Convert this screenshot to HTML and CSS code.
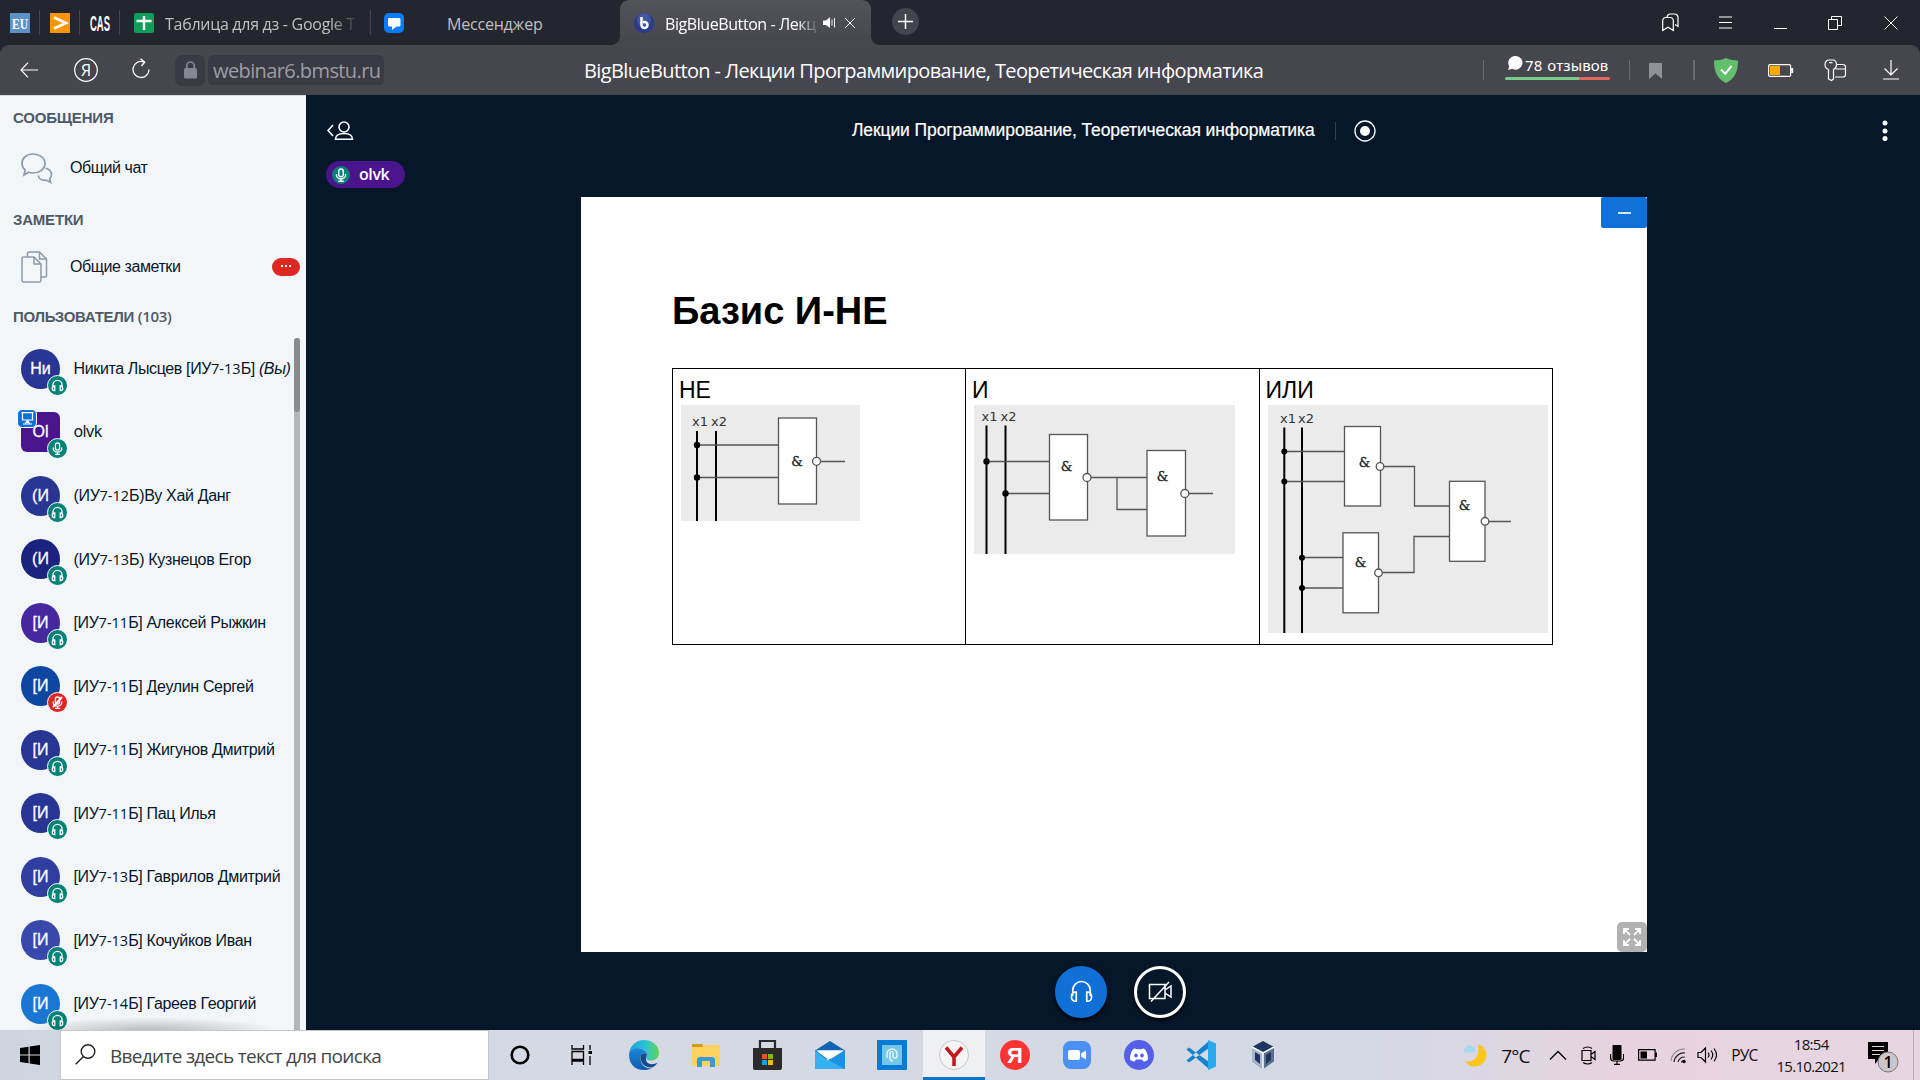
FILE: index.html
```html
<!DOCTYPE html>
<html lang="ru">
<head>
<meta charset="utf-8">
<title>BigBlueButton - Лекции Программирование, Теоретическая информатика</title>
<link rel="stylesheet" href="styles.css">
</head>
<body>
<svg class="defs" width="0" height="0">
  <symbol id="phones" viewBox="0 0 20 20"><path d="M3 13.500V9a7 7 0 0 1 14 0v4.500M5.800 10.500v7.300H5A3 3 0 0 1 2 14.800v-1.300a3 3 0 0 1 3-3zM14.200 10.500v7.300h.8a3 3 0 0 0 3-3v-1.300a3 3 0 0 0-3-3z" fill="none" stroke="currentColor"/></symbol>
  <symbol id="mic" viewBox="0 0 20 20"><rect x="6.800" y="1.500" width="6.400" height="11" rx="3.200" fill="none" stroke="currentColor"/><path d="M3.500 8.500v1.500a6.500 5.500 0 0 0 13 0V8.500M10 15.500V19M6 19h8" fill="none" stroke="currentColor"/></symbol>
</svg>
<div class="screen">
  <header class="tabs">
    <div class="pin"><svg width="20" height="20"><rect width="20" height="20" fill="#5b93c9"/><text x="10" y="15.500" text-anchor="middle" textLength="16" lengthAdjust="spacingAndGlyphs" class="eu">EU</text></svg></div>
    <div class="pin"><svg width="20" height="20"><rect width="20" height="20" fill="#ff9408"/><path d="M4 4.500l12 5.500-12 5.500" fill="none" stroke="#fff" stroke-width="2.600"/></svg></div>
    <div class="pin"><svg width="20" height="20"><text x="0" y="18" textLength="20" lengthAdjust="spacingAndGlyphs" class="cas">CAS</text></svg></div>
    <div class="tab tab-sheet"><svg width="20" height="20"><rect width="20" height="20" rx="2" fill="#0f9d58"/><path d="M10 3v14M2.500 8h15" stroke="#fff" stroke-width="2.400"/></svg><span class="fade">Таблица для дз - Google Т</span></div>
    <div class="tab tab-chat"><svg width="20" height="20"><rect width="20" height="20" rx="5" fill="#0a7cff"/><path d="M5 5h10a1.500 1.500 0 0 1 1.500 1.500v5.500a1.500 1.500 0 0 1-1.500 1.500h-2.500L8 17v-3.500H5.500A1.500 1.500 0 0 1 4 12V6.500A1.500 1.500 0 0 1 5 5z" fill="#fff"/></svg><span>Мессенджер</span></div>
    <div class="tab tab-active"><svg width="20" height="20"><circle cx="10" cy="10" r="10" fill="#283b8c"/><circle cx="10" cy="7" r="7" fill="#5567ac" opacity=".6"/><path d="M7.500 4v8a3 3 0 1 0 3-3H9" fill="none" stroke="#fff" stroke-width="2.500"/></svg><span class="fade">BigBlueButton - Лекц</span>
      <svg class="sound" width="13" height="12"><path d="M0 3.500h3L7 0v11L3 8H0z" fill="#fff"/><path d="M9 2.500v6M11.500 1v9.500" stroke="#fff" stroke-width="1"/></svg>
      <svg width="12" height="12"><path d="M1 1l10 10M11 1L1 11" stroke="#fff"/></svg></div>
    <div class="plus"><svg width="15" height="15"><path d="M7.500 0v15M0 7.500h15" stroke="#fff" stroke-width="1.500"/></svg></div>
    <div class="winbtns">
      <svg width="17" height="19" viewBox="0 0 17 19"><path d="M.7 7.500a3 3 0 0 1 3-3h4.600a3 3 0 0 1 3 3V17.500L6 14.300.7 17.500zM5 4.500a3.500 3.500 0 0 1 3-3.500h4.500A3.500 3.500 0 0 1 16 4.500v9l-3-2" fill="none" stroke="#fff" stroke-width="1.200"/></svg>
      <svg class="menu" width="13" height="13"><path d="M0 1h13M0 6.500h13M0 12h13" stroke="#fff" stroke-width="1.100"/></svg>
      <svg width="13" height="13"><path d="M0 12.500h13" stroke="#fff"/></svg>
      <svg class="restore" width="14" height="14"><path d="M.5 3.500h9v10h-9zM3.500 3.500v-3h10v9h-4" fill="none" stroke="#fff"/></svg>
      <svg width="14" height="14"><path d="M.5.5l13 13M13.500.5l-13 13" stroke="#fff"/></svg>
    </div>
  </header>
  <nav class="bar">
    <svg class="back" width="18" height="16"><path d="M8 .7L1 8l7 7.300M1 8h17" fill="none" stroke="#fff" stroke-width="1.200"/></svg>
    <svg class="ya" width="24" height="24"><circle cx="12" cy="12" r="11.300" fill="none" stroke="#fff" stroke-width="1.200"/><text x="12" y="17.500" text-anchor="middle" class="ya-t">Я</text></svg>
    <svg class="reload" width="18" height="22"><path d="M17 11.500a8 8 0 1 1-5.500-7.600M8.500.7l4.200 3.300L9.500 8" fill="none" stroke="#fff" stroke-width="1.300"/></svg>
    <div class="lock"><svg width="13" height="18"><rect y="7" width="13" height="10.500" rx="1.500" fill="#858791"/><path d="M2.800 8V4.700a3.700 3.700 0 0 1 7.400 0V8" fill="none" stroke="#858791" stroke-width="1.700"/></svg></div>
    <div class="url">webinar6.bmstu.ru</div>
    <div class="page-title">BigBlueButton - Лекции Программирование, Теоретическая информатика</div>
    <i class="sep s1"></i>
    <div class="reviews"><div><svg width="15" height="15"><path d="M7.500 0a6.800 6.800 0 1 1-3 12.800L0 14l1.200-3.800A6.800 6.800 0 0 1 7.500 0z" fill="#fff"/></svg><span>78 отзывов</span></div><i></i></div>
    <i class="sep s2"></i>
    <svg class="mark" width="13" height="16"><path d="M0 0h13v16l-6.500-5.500L0 16z" fill="#919198"/></svg>
    <i class="sep s3"></i>
    <svg class="shield" width="24" height="25"><path d="M12 0c4 2 8 2.200 12 2.500 0 11-3 18-12 22.500C3 20.500 0 13.500 0 2.500 4 2.200 8 2 12 0z" fill="#62bf6e"/><path d="M7 11.500l4.200 4.300L17.500 8" fill="none" stroke="#fff" stroke-width="2"/></svg>
    <svg class="batt" width="26" height="13"><rect x=".6" y=".6" width="22" height="11.800" rx="1.500" fill="none" stroke="#fff" stroke-width="1.200"/><rect x="2" y="2" width="10" height="9" fill="#ffa800"/><path d="M24.200 4v5" stroke="#fff" stroke-width="2"/></svg>
    <svg class="key" width="23" height="23"><path d="M13 5.500h6a2.500 2.500 0 0 1 2.500 2.500v7.500a2.500 2.500 0 0 1-2.500 2.500h-8M12 10h9.500M4.500 10.500A5 5 0 0 1 1 6c0-3 1.500-5 4-5h4c2.500 0 3.500 2 3.500 5a5 5 0 0 1-3 4.500V20l-2 1.500-3-1.500zM5 3.700h3.500" fill="none" stroke="#fff" stroke-width="1.200"/></svg>
    <svg class="down" width="16" height="20"><path d="M8 0v14.500M1.500 8.500L8 15l6.500-6.500M0 19h16" fill="none" stroke="#fff" stroke-width="1.200"/></svg>
  </nav>
  <div class="app">
    <aside class="side">
      <h2>СООБЩЕНИЯ</h2>
      <div class="item"><svg width="32" height="31"><path d="M12 1c6.500 0 12 4 12 9.500S18.500 20 12 20c-1.500 0-3-.2-4.300-.7L3 22l1.200-5C2 15.300 1 13 1 10.500 1 5 5.500 1 12 1zM26 15.500c3 1.500 4.500 3.500 4.500 6 0 1.800-.8 3-1.800 4l.8 3.800-3.800-2c-4.500.5-8-1.500-8.500-5M26 15.500l-1.500 0" fill="none" stroke="#8b9bab" stroke-width="1.700"/></svg><span>Общий чат</span></div>
      <h2 class="h-notes">ЗАМЕТКИ</h2>
      <div class="item notes"><svg width="27" height="32"><path d="M1 7.500a1.500 1.500 0 0 1 1.500-1.500H13l7 7v16.500a1.500 1.500 0 0 1-1.500 1.500h-16A1.500 1.500 0 0 1 1 29.500zM13 6v7h7M6.500 6V2.500A1.500 1.500 0 0 1 8 1h10.500l7 7v16.500A1.500 1.500 0 0 1 24 26h-4M18.500 1v7h7" fill="none" stroke="#8b9bab" stroke-width="1.500"/></svg><span>Общие заметки</span><b class="badge"><i></i><i></i><i></i></b></div>
      <h2 class="h-users">ПОЛЬЗОВАТЕЛИ <span class="cnt">(103)</span></h2>
      <div class="users">
        <ul>
          <li><div class="av a1">Ни<b><svg><use href="#phones"/></svg></b></div><span class="me">Никита Лысцев [ИУ<s>7-13</s>Б] <em>(Вы)</em></span></li>
          <li><div class="av a2">Ol<i><svg width="13" height="13"><path d="M.5.7h12M1.500 1v7h10V1M1.500 8h10M4 12l2.500-3.500L9 12M2 12h9M6.500 8v3" fill="none" stroke="#fff" stroke-width="1.200"/></svg></i><b><svg><use href="#mic"/></svg></b></div><span class="lat">olvk</span></li>
          <li><div class="av a1">(И<b><svg><use href="#phones"/></svg></b></div><span>(ИУ<s>7-12</s>Б)Ву Хай Данг</span></li>
          <li><div class="av a4">(И<b><svg><use href="#phones"/></svg></b></div><span>(ИУ<s>7-13</s>Б) Кузнецов Егор</span></li>
          <li><div class="av a5">[И<b><svg><use href="#phones"/></svg></b></div><span>[ИУ<s>7-11</s>Б] Алексей Рыжкин</span></li>
          <li><div class="av a6">[И<b class="off"><svg><use href="#mic"/><path d="M2 11L11 1" stroke="#fff"/></svg></b></div><span>[ИУ<s>7-11</s>Б] Деулин Сергей</span></li>
          <li><div class="av a1">[И<b><svg><use href="#phones"/></svg></b></div><span>[ИУ<s>7-11</s>Б] Жигунов Дмитрий</span></li>
          <li><div class="av a1">[И<b><svg><use href="#phones"/></svg></b></div><span>[ИУ<s>7-11</s>Б] Пац Илья</span></li>
          <li><div class="av a9">[И<b><svg><use href="#phones"/></svg></b></div><span>[ИУ<s>7-13</s>Б] Гаврилов Дмитрий</span></li>
          <li><div class="av a10">[И<b><svg><use href="#phones"/></svg></b></div><span>[ИУ<s>7-13</s>Б] Кочуйков Иван</span></li>
          <li><div class="av a11">[И<b><svg><use href="#phones"/></svg></b></div><span>[ИУ<s>7-14</s>Б] Гареев Георгий</span></li>
        </ul>
        <div class="scroll"><i></i></div>
      </div>
    </aside>
    <main class="main">
      <div class="top">
        <svg class="toggle" width="27" height="20"><path d="M6 4L1 9.500 6 15" fill="none" stroke="#fff" stroke-width="1.600"/><circle cx="17" cy="6" r="5" fill="none" stroke="#fff" stroke-width="1.600"/><path d="M8.500 18.200c0-4.500 3.500-5.700 8.500-5.700s8.500 1.200 8.500 5.700z" fill="none" stroke="#fff" stroke-width="1.600"/></svg>
        <div class="room">Лекции Программирование, Теоретическая информатика</div>
        <i class="vsep"></i>
        <svg class="rec" width="22" height="22"><circle cx="11" cy="11" r="10" fill="none" stroke="#fff" stroke-width="1.300"/><circle cx="11" cy="11" r="5" fill="#fff"/></svg>
        <svg class="dots" width="6" height="22"><g fill="#fff"><circle cx="3" cy="3" r="2.500"/><circle cx="3" cy="11" r="2.500"/><circle cx="3" cy="18.500" r="2.500"/></g></svg>
      </div>
      <div class="talk"><b><svg width="14" height="16"><use href="#mic"/></svg></b><span>olvk</span></div>
      <section class="slide">
        <button class="min"><i></i></button>
        <h1>Базис И-НЕ</h1>
        <div class="table">
          <div class="cell"><p>НЕ</p>
            <svg width="179" height="116" viewBox="681 405 179 116">
              <g class="bus"><path d="M697 431v90M716 431v90"/></g>
              <g class="wire"><path d="M697 445h81M697 477.500h81M820 461.500h25"/><rect x="778.500" y="418" width="38" height="86"/><circle cx="816.500" cy="461.300" r="4"/></g>
              <circle cx="697" cy="445" r="3.200"/><circle cx="697" cy="477.500" r="3.200"/>
              <text class="x" x="692" y="426">x1</text><text class="x" x="711" y="426">x2</text><text class="amp" x="797" y="466">&amp;</text>
            </svg></div>
          <div class="cell"><p>И</p>
            <svg width="261" height="149" viewBox="974 405 261 149">
              <g class="bus"><path d="M986.500 425.500V554M1005.500 425.500V554"/></g>
              <g class="wire"><path d="M986.500 461.500H1049M1005.500 493.500H1049M1087 477.500h60M1117 477.500v32h30M1185 493.500h28"/><rect x="1049.500" y="434.500" width="38" height="85.500"/><rect x="1147" y="450.500" width="38.500" height="85.500"/><circle cx="1087" cy="477.500" r="4"/><circle cx="1184.800" cy="493.500" r="4"/></g>
              <circle cx="986.500" cy="461.500" r="3.200"/><circle cx="1005.500" cy="493.500" r="3.200"/>
              <text class="x" x="981.500" y="420.500">x1</text><text class="x" x="1000.500" y="420.500">x2</text><text class="amp" x="1066.500" y="471">&amp;</text><text class="amp" x="1162.500" y="480.500">&amp;</text>
            </svg></div>
          <div class="cell last"><p>ИЛИ</p>
            <svg width="280" height="228" viewBox="1267 405 280 228">
              <g class="bus"><path d="M1283.300 427.500V633M1301 427.500V633"/></g>
              <g class="wire"><path d="M1283 451.500h60.500M1283 481.500h60.500M1379 466.500h34.500v39.500h35M1301 557.500h41M1301 588h41M1377.500 572.500h35.500v-36h35.500M1484 521.500h26"/><rect x="1343.500" y="426.500" width="36" height="79.500"/><rect x="1342" y="532.800" width="35.500" height="80"/><rect x="1448.500" y="481.300" width="35.500" height="80"/><circle cx="1379" cy="466.500" r="3.800"/><circle cx="1377.500" cy="572.800" r="3.800"/><circle cx="1484" cy="521.300" r="3.800"/></g>
              <circle cx="1283.300" cy="451.500" r="3"/><circle cx="1283.300" cy="481.500" r="3"/><circle cx="1301" cy="557.700" r="3"/><circle cx="1301" cy="588" r="3"/>
              <text class="x" x="1279" y="423">x1</text><text class="x" x="1297" y="423">x2</text><text class="amp" x="1363.500" y="466.500">&amp;</text><text class="amp" x="1359.500" y="567">&amp;</text><text class="amp" x="1463.500" y="510">&amp;</text>
            </svg></div>
        </div>
        <button class="full"><svg width="20" height="20"><path d="M2 7V2h5M2 2l6 6M13 2h5v5M18 2l-6 6M2 13v5h5M2 18l6-6M18 13v5h-5M18 18l-6-6" fill="none" stroke="#fff" stroke-width="1.800"/></svg></button>
      </section>
      <div class="actions">
        <div class="round blue"><svg width="25" height="25"><use href="#phones"/></svg></div>
        <div class="round"><svg width="25" height="22"><path d="M1.500 3.500h15.500v14H1.500zM17 9l6-4v11l-6-4M3 20.500L21 1" fill="none" stroke="#fff" stroke-width="1.500"/></svg></div>
      </div>
    </main>
  </div>
  <footer class="task">
    <div class="start"><svg width="20" height="20"><path d="M0 3l8.500-1.200v7.700H0zM9.700 1.600L20 0v9.500H9.700zM0 10.600h8.500v7.700L0 17zM9.700 10.600H20V20L9.700 18.500z"/></svg></div>
    <div class="search"><svg width="21" height="21"><circle cx="13" cy="7.500" r="6.800" fill="none" stroke="#222" stroke-width="1.400"/><path d="M8.500 12.500L.7 20.300" stroke="#222" stroke-width="1.400"/></svg><span>Введите здесь текст для поиска</span></div>
    <div class="apps">
      <div><svg width="20" height="20"><circle cx="10" cy="10" r="8.300" fill="none" stroke="#000" stroke-width="2.600"/></svg></div>
      <div class="tv"><svg width="22" height="20"><path d="M1 0v4h11.500V0M1 20v-4h11.500v4M1 6.500h11.500v8H1zM19 0v5M19 11v9" fill="none" stroke="#000" stroke-width="1.300"/><path d="M17.500 6h3.500v3h-3.500z"/></svg></div>
      <div><svg width="30" height="30"><defs><linearGradient id="e1"><stop offset="0" stop-color="#1c9ede"/><stop offset=".55" stop-color="#2cc3d2"/><stop offset="1" stop-color="#63d552"/></linearGradient><linearGradient id="e2" x2="0" y2="1"><stop offset="0" stop-color="#1a86d9"/><stop offset="1" stop-color="#0f5cae"/></linearGradient></defs><path d="M0 16C0 6 7 0 15 0c9 0 15 6 15 13 0 5-4 7.500-8 7.500s-5-1.500-4.500-3c1.500-3 .5-7.500-5-8.500C6 8 1 12 0 16z" fill="url(#e1)"/><path d="M0 15C1 10 6 8 11 8.700c4.500.8 6.800 3 6.800 5.300-4-2-7 1-6.500 5 .6 6 6 10.500 11.700 9-2.500 1.500-5 2-8 2C6 30 0 24 0 15z" fill="url(#e2)"/><path d="M11.500 16c-1.500 7 5.500 12 11.500 11.500 2.500-1 4.500-3 5.500-5-5 3-12 2-11.500-4 0-1.500 1-2 .8-4.500-2-1.500-5.500-.5-6.300 2z" fill="#134c8c"/></svg></div>
      <div><svg width="28" height="24"><path d="M0 1h10l3 4H0z" fill="#d89a12"/><path d="M0 4h10l3-2h15v21H0z" fill="#ffd260"/><path d="M5 24v-7a3 3 0 0 1 3-3h12a3 3 0 0 1 3 3v7h-5v-6h-8v6z" fill="#3a99d8"/></svg></div>
      <div><svg width="29" height="30"><path d="M7 9V1h15v8" fill="none" stroke="#2a2a2a" stroke-width="2.200"/><path d="M0 8h29v20a2 2 0 0 1-2 2H2a2 2 0 0 1-2-2z" fill="#2b2b2b"/><path d="M9 14h5v5H9z" fill="#f25022"/><path d="M15 14h5v5h-5z" fill="#7fba00"/><path d="M9 20h5v5H9z" fill="#00a4ef"/><path d="M15 20h5v5h-5z" fill="#ffb900"/></svg></div>
      <div><svg width="30" height="28"><path d="M0 9.500L15 0l15 9.500V18H0z" fill="#1063b5"/><path d="M1 9.500h28L15 20z" fill="#fff"/><path d="M0 9.500L14 20 30 9.500V28H0z" fill="#35b0f0"/><path d="M30 9.500V28L13 19z" fill="#1c91e0"/><path d="M3 9.500h25L15.500 18z" fill="#fff"/></svg></div>
      <div><svg width="30" height="30"><path d="M0 0h30v30H0z" fill="#087bd6"/><path d="M5 5h20v20H5z" fill="#75c5e9"/><path d="M10 18v-4a5 5 0 0 1 10 0v2c0 3-4 2.500-4 0v-3c0-2-3-2-3 0v5c0 2 1 3 3 3" fill="none" stroke="#e4f6ff" stroke-width="1.500"/></svg></div>
      <div class="on"><svg width="30" height="30"><circle cx="15" cy="15" r="14.500" fill="#f5f5f5" stroke="#c8c8c8"/><path d="M7 7.500l8 9.500 8-9.500M15 16v10" fill="none" stroke="#c4161c" stroke-width="3.500"/></svg></div>
      <div><svg width="30" height="30"><circle cx="15" cy="15" r="15" fill="#fc3434"/><text class="ya2" x="15" y="23" text-anchor="middle">Я</text></svg></div>
      <div><svg width="28" height="28"><rect width="28" height="28" rx="8" fill="#4a90f5"/><rect x="5" y="9" width="12" height="10" rx="2" fill="#fff"/><path d="M18 12.500l5-3v9l-5-3z" fill="#fff"/></svg></div>
      <div><svg width="30" height="30"><circle cx="15" cy="15" r="15" fill="#5460ea"/><path d="M10.500 8.500l3 .8h3l3-.8c3 1 4.500 6.500 4.500 11-1.500 1.500-3 2-4.500 2l-1.500-2h-6l-1.500 2c-1.500 0-3-.5-4.500-2 0-4.500 1.500-10 4.500-11z" fill="#fff"/><ellipse cx="12" cy="15.500" rx="1.800" ry="2" fill="#5460ea"/><ellipse cx="18" cy="15.500" rx="1.800" ry="2" fill="#5460ea"/></svg></div>
      <div><svg width="30" height="30"><path d="M.5 9.500L3 7.500 23 22v7zM.5 20.500L3 22.500 23 8V1z" fill="#1481cc"/><path d="M22 0l8 3.500v23L22 30z" fill="#28a8ee"/></svg></div>
      <div><svg width="26" height="30"><path d="M2 7l11-6 11 6v14l-11 8-11-8z" fill="#1d3560"/><path d="M2 7l11 6v16L2 21z" fill="#a6b5cb"/><path d="M24 7l-11 6v16l11-8z" fill="#5b7090"/><path d="M5 12l5 3v9l-5-4zM21 12l-5 3v9l5-4z" fill="#1d3560"/><path d="M2 7l11 6 11-6M13 13v16" fill="none" stroke="#fff" stroke-width="1.500"/></svg></div>
    </div>
    <div class="tray">
      <svg class="moon" width="26" height="25"><path d="M15 1a11.500 11.500 0 1 1-13 17c6 1.500 11-1 12.500-6.500 1-3.500 1.500-7.500.5-10.500z" fill="#ffc51d"/><path d="M3 9.500a2.500 2.500 0 0 1 .5-5 3.500 3.500 0 0 1 6.500-.5 2.800 2.800 0 0 1 .5 5.500z" fill="#a9d9f2"/></svg>
      <span class="deg">7°C</span>
      <svg class="chev" width="18" height="10"><path d="M1 9.500l8-8 8 8" fill="none" stroke="#000" stroke-width="1.300"/></svg>
      <svg class="meet" width="15" height="19"><path d="M1 4.500h9v10H1zM10 8.500l4-3v8l-4-3M2 2.500q5-3 9 0M2 16.500q5 3 9 0" fill="none" stroke="#000" stroke-width="1.200"/></svg>
      <svg class="tmic" width="14" height="20"><rect x="2.500" width="9" height="15" rx="1"/><path d="M.6 9v4q0 3 3 3h7q3 0 3-3V9M7 16v3M4 19.300h6" fill="none" stroke="#000" stroke-width="1.200"/></svg>
      <svg class="tbat" width="20" height="12"><path d="M.6.6h16.500v10.500H.6z" fill="none" stroke="#000" stroke-width="1.200"/><path d="M2.500 2.500H9v7H2.500zM17 3.500h2v4.500h-2z"/></svg>
      <svg class="wifi" width="17" height="17"><path d="M1 14A13 13 0 0 1 15 2" fill="none" stroke="#8d8288" stroke-width="1.100"/><path d="M4 15A10 10 0 0 1 15 6M8 15a7 7 0 0 1 7-5M11.500 15.500q0-2 3-2" fill="none" stroke="#222" stroke-width="1.200"/><circle cx="14" cy="14.500" r="1.700"/></svg>
      <svg class="vol" width="22" height="18"><path d="M1 6.500h3L8.500 2v14L4 11.500H1zM11 6.500q2 2.500 0 5M14 4.500q3.500 4.500 0 9M17 2.500q5 6.500 0 13" fill="none" stroke="#000" stroke-width="1.200"/></svg>
      <span class="lang">РУС</span>
      <div class="clock"><span>18:54</span><span>15.10.2021</span></div>
      <svg class="note" width="31" height="31"><path d="M0 0h20v17h-9l-4 5v-5H0z"/><path d="M4 4.500h12M4 8.500h12M4 12.500h8" stroke="#e6d3de" stroke-width="1.200"/><circle cx="20" cy="20" r="10" fill="#cdc6c9" stroke="#777"/><text x="20" y="25.500" text-anchor="middle" class="one">1</text></svg>
      <i class="edge"></i>
    </div>
  </footer>
</div>
</body>
</html>
```
FILE: styles.css
```css
* { box-sizing: border-box; margin: 0; padding: 0; }
body { width: 1920px; height: 1080px; overflow: hidden; font-family: "Liberation Sans", sans-serif; }
.defs { position: absolute; }
svg { display: block; flex: none; }
i, em { font-style: normal; }
button { border: 0; }
.screen { display: flex; flex-direction: column; height: 1080px; background: #24262f; }

/* tab strip */
.tabs { display: flex; height: 45px; background: #24262f; font: 16px "Open Sans", sans-serif; color: #bfc0c5; }
.pin { width: 40px; padding: 13px 0 0 10px; position: relative; }
.pin svg { overflow: visible; }
.pin::after, .tab-sheet::after { content: ""; position: absolute; right: 0; top: 10px; width: 1px; height: 25px; background: #44464f; }
.eu { font: bold 14px "Liberation Serif", serif; fill: #fff; }
.cas { font: bold 22px "Liberation Sans", sans-serif; fill: #fff; }
.tab { display: flex; align-items: flex-start; position: relative; padding-top: 13px; white-space: nowrap; }
.tab span { line-height: 22px; }
.fade { overflow: hidden; -webkit-mask-image: linear-gradient(90deg, #000 85%, transparent); mask-image: linear-gradient(90deg, #000 85%, transparent); }
.tab-sheet { width: 251px; padding-left: 14px; }
.tab-sheet span { width: 194px; margin-left: 11px; letter-spacing: -.28px; }
.tab-chat { width: 249px; padding-left: 13px; }
.tab-chat span { margin-left: 43px; letter-spacing: -.2px; }
.tab-active { width: 251px; padding-left: 14px; background: linear-gradient(#53535c, #46464f); border-radius: 9px 9px 0 0; color: #fff; }
.tab-active::before, .tab-active::after { content: ""; position: absolute; bottom: 0; width: 8px; height: 8px; }
.tab-active::before { left: -8px; background: radial-gradient(circle at 0 0, #24262f 7.5px, #46464f 8px); }
.tab-active::after { right: -8px; background: radial-gradient(circle at 100% 0, #24262f 7.5px, #46464f 8px); }
.tab-active span { width: 155px; margin-left: 11px; letter-spacing: -.42px; }
.sound { margin: 4px 8px 0 3px; }
.sound + svg { margin-top: 4px; }
.plus { width: 27px; height: 27px; border-radius: 50%; background: #43444d; margin: 8px 0 0 21px; display: grid; place-items: center; }
.winbtns { display: flex; margin-left: auto; padding: 0 22px 0 0; align-items: flex-start; }
.winbtns svg { margin: 16px 0 0 42px; }
.winbtns svg:first-child { margin-top: 13px; }
.winbtns .menu { margin-left: 40px; }
.winbtns .restore { margin-left: 41px; }

/* address bar */
.bar { display: flex; height: 50px; background: #46464f; border-radius: 9px 9px 0 0; align-items: center; font-family: "Open Sans", sans-serif; white-space: nowrap; }
.back { margin-left: 20px; }
.ya { margin-left: 35.500px; }
.ya-t { font: 16px "Open Sans", sans-serif; fill: #fff; }
.reload { margin-left: 34px; margin-top: -3px; }
.lock { width: 30px; height: 31px; margin-left: 25.500px; border-radius: 7px; background: #393a43; display: grid; place-items: center; }
.url { width: 176px; height: 30px; margin-left: 3px; padding-left: 5px; border-radius: 5px; background: #393a43; color: #9c9da5; font-size: 20px; line-height: 31px; letter-spacing: -.6px; }
.page-title { width: 899px; margin-left: 200px; color: #fff; font-size: 20px; line-height: 30px; letter-spacing: -.62px; padding-top: 2px; }
.sep { width: 1px; height: 20px; background: #6b6b74; }
.s3 { width: 2px; }
.reviews { width: 105px; margin-left: 21px; align-self: stretch; color: #fff; font: 15px "Noto Sans", sans-serif; }
.reviews div { display: flex; padding: 10px 0 0 3px; height: 32px; }
.reviews svg { margin-top: 1px; }
.reviews span { margin-left: 2px; line-height: 20px; letter-spacing: .1px; word-spacing: 1px; }
.reviews > i { display: block; height: 3px; border-radius: 2px; background: linear-gradient(90deg, #7cc990 74px, #e0685c 74px); }
.s2 { margin-left: 19px; }
.mark { margin: 1px 0 0 19px; }
.s3 { margin-left: 31px; }
.shield { margin-left: 19px; }
.batt { margin-left: 30px; }
.key { margin-left: 30px; }
.down { margin-left: 36px; }

/* left panel */
.app { display: flex; height: 935px; overflow: hidden; }
.side { width: 306px; background: #f3f6f9; color: #06172a; border-top: 1px solid #d7dce8; }
.side h2 { padding-left: 13px; font-size: 15px; line-height: 20px; color: #4e5a66; margin-top: 12px; white-space: nowrap; letter-spacing: -.2px; }
.item { display: flex; align-items: center; padding-left: 21px; height: 40px; margin-top: 20px; font-size: 16px; white-space: nowrap; }
.item svg { width: 32px; }
.item span { margin-left: 17px; letter-spacing: -.42px; }
.side .h-notes { margin-top: 22px; }
.item.notes { margin-top: 16px; height: 41px; }
.badge { width: 28px; height: 18px; margin-left: auto; margin-right: 6px; border-radius: 9px; background: #df2721; display: flex; gap: 2px; align-items: center; justify-content: center; }
.badge i { width: 2px; height: 2px; background: #fff; margin-bottom: 2px; }
.side .h-users { margin-top: 19px; letter-spacing: -.3px; }
.cnt { font-family: "Open Sans", sans-serif; font-weight: 600; }
.users { display: flex; margin-top: 10px; height: 694px; position: relative; }
.users ul { width: 294px; list-style: none; overflow: hidden; }
.users::after { content: ""; position: absolute; left: 20px; bottom: 0; width: 260px; height: 14px; background: radial-gradient(farthest-side at 50% 100%, rgba(0,0,0,.25), transparent); }
.users li { display: flex; align-items: center; height: 63.500px; padding-left: 21px; white-space: nowrap; font-size: 16px; }
.users li > span { margin-left: 13.500px; letter-spacing: -.34px; }
.users li > .me { letter-spacing: -.37px; }
.users em { font-style: italic; }
.users s { text-decoration: none; font: 14.500px "Open Sans", sans-serif; letter-spacing: 0; }
.users li > .lat { font: 16px "Noto Sans", sans-serif; letter-spacing: -.6px; margin-top: -2px; }
.av { position: relative; width: 39px; height: 40px; border-radius: 50%; color: #fff; display: grid; place-items: center; font-size: 16px; -webkit-text-stroke: .3px #fff; }
.av b { position: absolute; left: 26px; top: 26px; width: 21px; height: 21px; border: 1px solid #fff; border-radius: 50%; background: #058277; display: grid; place-items: center; }
.av b svg { width: 13px; height: 13px; stroke-width: 2; overflow: visible; }
.av b.off { background: #df2721; }
.av i { position: absolute; left: -4px; top: -3px; width: 20px; height: 19px; border-radius: 5px; border: 1px solid #fff; background: #0f70d7; display: grid; place-items: center; }
.a1 { background: #283593; } .a2 { background: #4a148c; border-radius: 6px; } .a4 { background: #1a237e; }
.a5 { background: #4527a0; } .a6 { background: #0d47a1; } .a9 { background: #303f9f; } .a10 { background: #3949ab; } .a11 { background: #1976d2; }
.scroll { width: 6px; height: 693px; margin-top: 1px; background: #b5b5b9; border-radius: 3px 3px 0 0; }
.scroll i { display: block; height: 74px; background: #8b8b8d; border-radius: 3px; }

/* conference area */
.main { width: 1614px; background: #06172a; display: flex; flex-direction: column; }
.top { display: flex; height: 66px; padding-top: 5px; align-items: center; color: #fff; }
.toggle { margin-left: 21px; }
.room { width: 463px; margin-left: 498px; font-size: 17.500px; line-height: 20px; margin-top: -1px; letter-spacing: -.11px; white-space: nowrap; -webkit-text-stroke: .2px #fff; }
.vsep { width: 1px; height: 18px; margin-left: 20px; background: #2f4254; }
.rec { margin-left: 18px; }
.dots { margin-left: auto; margin-right: 32px; margin-top: 1px; }
.talk { width: 79px; height: 27px; margin-left: 20px; border-radius: 14px; background: #4a148c; display: flex; align-items: center; color: #fff; font: 600 16px "Open Sans", sans-serif; }
.talk b { width: 18px; height: 18px; margin-left: 6px; border-radius: 50%; background: #058277; display: grid; place-items: center; }
.talk svg { stroke-width: 2; }
.talk span { margin: -2px 0 0 9px; letter-spacing: -.4px; line-height: 24px; }
.slide { width: 1066px; height: 755px; margin: 9px 0 0 275px; background: #fff; display: flex; flex-direction: column; }
.min { align-self: flex-end; width: 46px; height: 31px; background: #0f70d7; border-radius: 2px; display: grid; place-items: center; }
.min i { width: 13px; height: 2px; background: #d5e6f8; }
.slide h1 { margin: 61px 0 0 91px; font-size: 38px; line-height: 44px; white-space: nowrap; }
.table { display: grid; grid-template-columns: 293px 294px 293px; width: 881px; height: 277px; margin: 35px 0 0 91px; border: solid #000; border-width: 1px 0 1px 1px; }
.cell { border-right: 1px solid #000; padding: 8px 0 0 8px; }
.cell.last { padding-left: 7.500px; }
.cell p { font-size: 23px; line-height: 26px; margin: 0 0 2px -2px; }
.cell svg { background: #ebebeb; }
.bus { stroke: #000; stroke-width: 2; }
.wire { stroke: #555; stroke-width: 1.300; fill: none; }
.wire rect, .wire circle { fill: #fff; }
.x { font: 13px "DejaVu Sans", sans-serif; fill: #333; }
.amp { font: 13px "DejaVu Serif", serif; text-anchor: middle; fill: #222; stroke: #222; stroke-width: .3; }
.full { align-self: flex-end; margin-top: auto; width: 30px; height: 30px; border-radius: 5px; background: #b2b2b2; display: grid; place-items: center; }
.actions { display: flex; gap: 27px; margin: 14px 0 0 749px; }
.round { width: 52px; height: 52px; border-radius: 50%; border: 3px solid #fff; display: grid; place-items: center; color: #fff; box-shadow: 0 2px 4px #000; }
.blue { background: #0f70d7; border-color: #0f70d7; }
.blue svg { margin-top: -2px; stroke-width: 1.3; }

/* taskbar */
.task { display: flex; height: 50px; background: linear-gradient(90deg, #cfd5df, #d5d9e3 30%, #d3d9e4 70%, #dcd7e2 78%, #e7d3df 84%, #e6d5e1); font-family: "Open Sans", sans-serif; color: #111; white-space: nowrap; }
.start { width: 60px; padding: 15px 0 0 20px; }
.search { width: 429px; height: 50px; background: #fff; border: 1px solid #c7c7c7; display: flex; align-items: center; padding: 0 0 1px 14px; font-size: 19px; color: #444; }
.search span { margin: 2px 0 0 14px; letter-spacing: -.69px; }
.apps { display: grid; grid-template-columns: repeat(13, 61.950px); }
.apps > div { display: grid; place-items: center; }
.on { background: #eef0f4; border-bottom: 3px solid #0a76c8; padding-top: 3px; }
.ya2 { font: bold 22px "Liberation Sans", sans-serif; fill: #fff; }
.tray { flex: 1; display: flex; align-items: center; }
.moon { margin-left: 169px; }
.deg { margin: 2px 0 0 12px; width: 48px; font-size: 19px; letter-spacing: -.8px; }
.chev { width: 18px; }
.meet { margin-left: 14px; }
.tmic { margin-left: 14px; }
.tbat { margin-left: 14px; }
.wifi { margin-left: 12px; }
.vol { margin-left: 10px; }
.lang { width: 45px; margin-left: 12px; font-size: 15.500px; letter-spacing: -.8px; }
.clock { width: 70px; display: flex; flex-direction: column; align-items: center; font-size: 15px; line-height: 22px; letter-spacing: -.7px; margin-top: -1px; }
.note { margin: 4px 0 0 22px; }
.one { font: 600 16px "Open Sans", sans-serif; }
.edge { width: 1px; height: 50px; margin-left: 14px; background: #b9aeb8; }
```
